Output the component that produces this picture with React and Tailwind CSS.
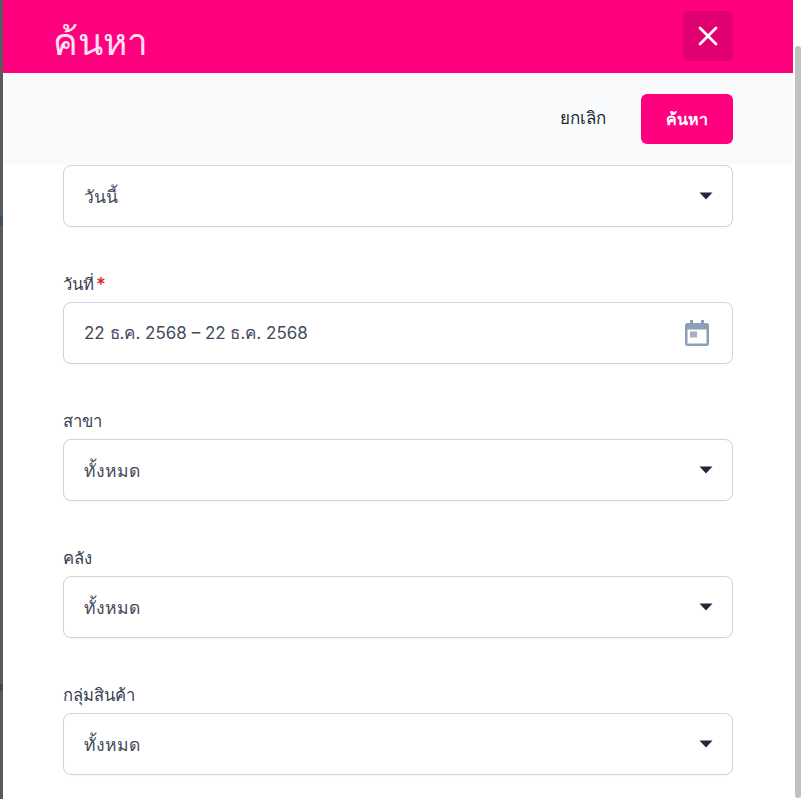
import { X } from "lucide-react";

const font = { fontFamily: '"Inter", "Noto Sans", "Noto Sans CJK SC", sans-serif' };

function Caret() {
  return (
    <svg width="14" height="8" viewBox="0 0 14 8" className="mr-[-1px]">
      <path d="M0.5 0.5h13L7 7.5z" fill="#1f2937" />
    </svg>
  );
}

function CalendarIcon() {
  return (
    <svg width="24" height="26" viewBox="0 0 24 26" className="mr-[3px]">
      <path
        fill="#8e9db8"
        d="M5 0h3v3h8V0h3v3h2.500A2.500 2.500 0 0 1 24 5.500v18a2.500 2.500 0 0 1-2.500 2.500h-19A2.500 2.500 0 0 1 0 23.500v-18A2.500 2.500 0 0 1 2.500 3H5zM2.500 9.500v14h19v-14z"
      />
      <rect x="5" y="11.500" width="7" height="6" fill="#a3b0c6" />
    </svg>
  );
}

function Field({ label, required, value, icon, valueSize = "text-[17.5px]" }) {
  return (
    <div>
      {label && (
        <label className="mb-[8px] flex h-[20px] items-center text-[16.6px] font-medium text-[#374151]">
          {label}
          {required && <span className="ml-[2px] mt-[1px] text-[19px] leading-none text-[#dc2626]">*</span>}
        </label>
      )}
      <div className={`flex h-[62px] items-center justify-between rounded-[8px] border border-[#c9d4e5] bg-white px-[20px] text-[#434c5b] shadow-[0_1px_2px_rgba(0,0,0,0.03)] ${valueSize}`}>
        <span className="relative top-[1px]">{value}</span>
        {icon === "calendar" ? <CalendarIcon /> : <Caret />}
      </div>
    </div>
  );
}

export default function App() {
  return (
    <div className="flex h-[799px] w-[803px] overflow-hidden bg-white" style={font}>
      {/* what shows of the dimmed page behind the panel */}
      <div className="flex w-[3px] shrink-0 flex-col bg-[#5a5a5a]">
        <div className="mt-[216px] h-[10px] bg-[#3f5060]" />
        <div className="mt-[458px] h-[7px] bg-[#474747]" />
      </div>

      <div className="flex w-[790px] shrink-0 flex-col">
        <header className="flex h-[73px] shrink-0 items-center justify-between bg-[#ff007f] pl-[50px] pr-[60px]">
          <h1 className="mt-[9px] text-[37px] font-medium leading-none text-[#ffe0ef]">ค้นหา</h1>
          <button className="mb-[1px] flex h-[50px] w-[50px] items-center justify-center rounded-[6px] bg-[#e0006f] text-white">
            <X size={32} strokeWidth={2} />
          </button>
        </header>

        <div className="flex h-[91px] shrink-0 items-center justify-end gap-[35px] bg-[#f9fafb] pr-[60px]">
          <button className="text-[17px] font-medium text-[#1f2937]">ยกเลิก</button>
          <button className="flex h-[50px] w-[92px] items-center justify-center rounded-[6px] bg-[#ff007f] text-[16px] font-semibold text-white">
            ค้นหา
          </button>
        </div>

        <div className="flex flex-col gap-[47px] px-[60px] pt-[1px]">
          <Field value="วันนี้" />
          <Field label="วันที่" required value="22 ธ.ค. 2568 – 22 ธ.ค. 2568" icon="calendar" valueSize="text-[17px]" />
          <Field label="สาขา" value="ทั้งหมด" />
          <Field label="คลัง" value="ทั้งหมด" />
          <Field label="กลุ่มสินค้า" value="ทั้งหมด" />
        </div>
      </div>

      <div className="flex w-[10px] shrink-0 flex-col bg-white">
        <div className="ml-[2px] mt-[46px] h-[752px] w-[6px] rounded-full bg-[#c1c1c1]" />
      </div>
    </div>
  );
}
